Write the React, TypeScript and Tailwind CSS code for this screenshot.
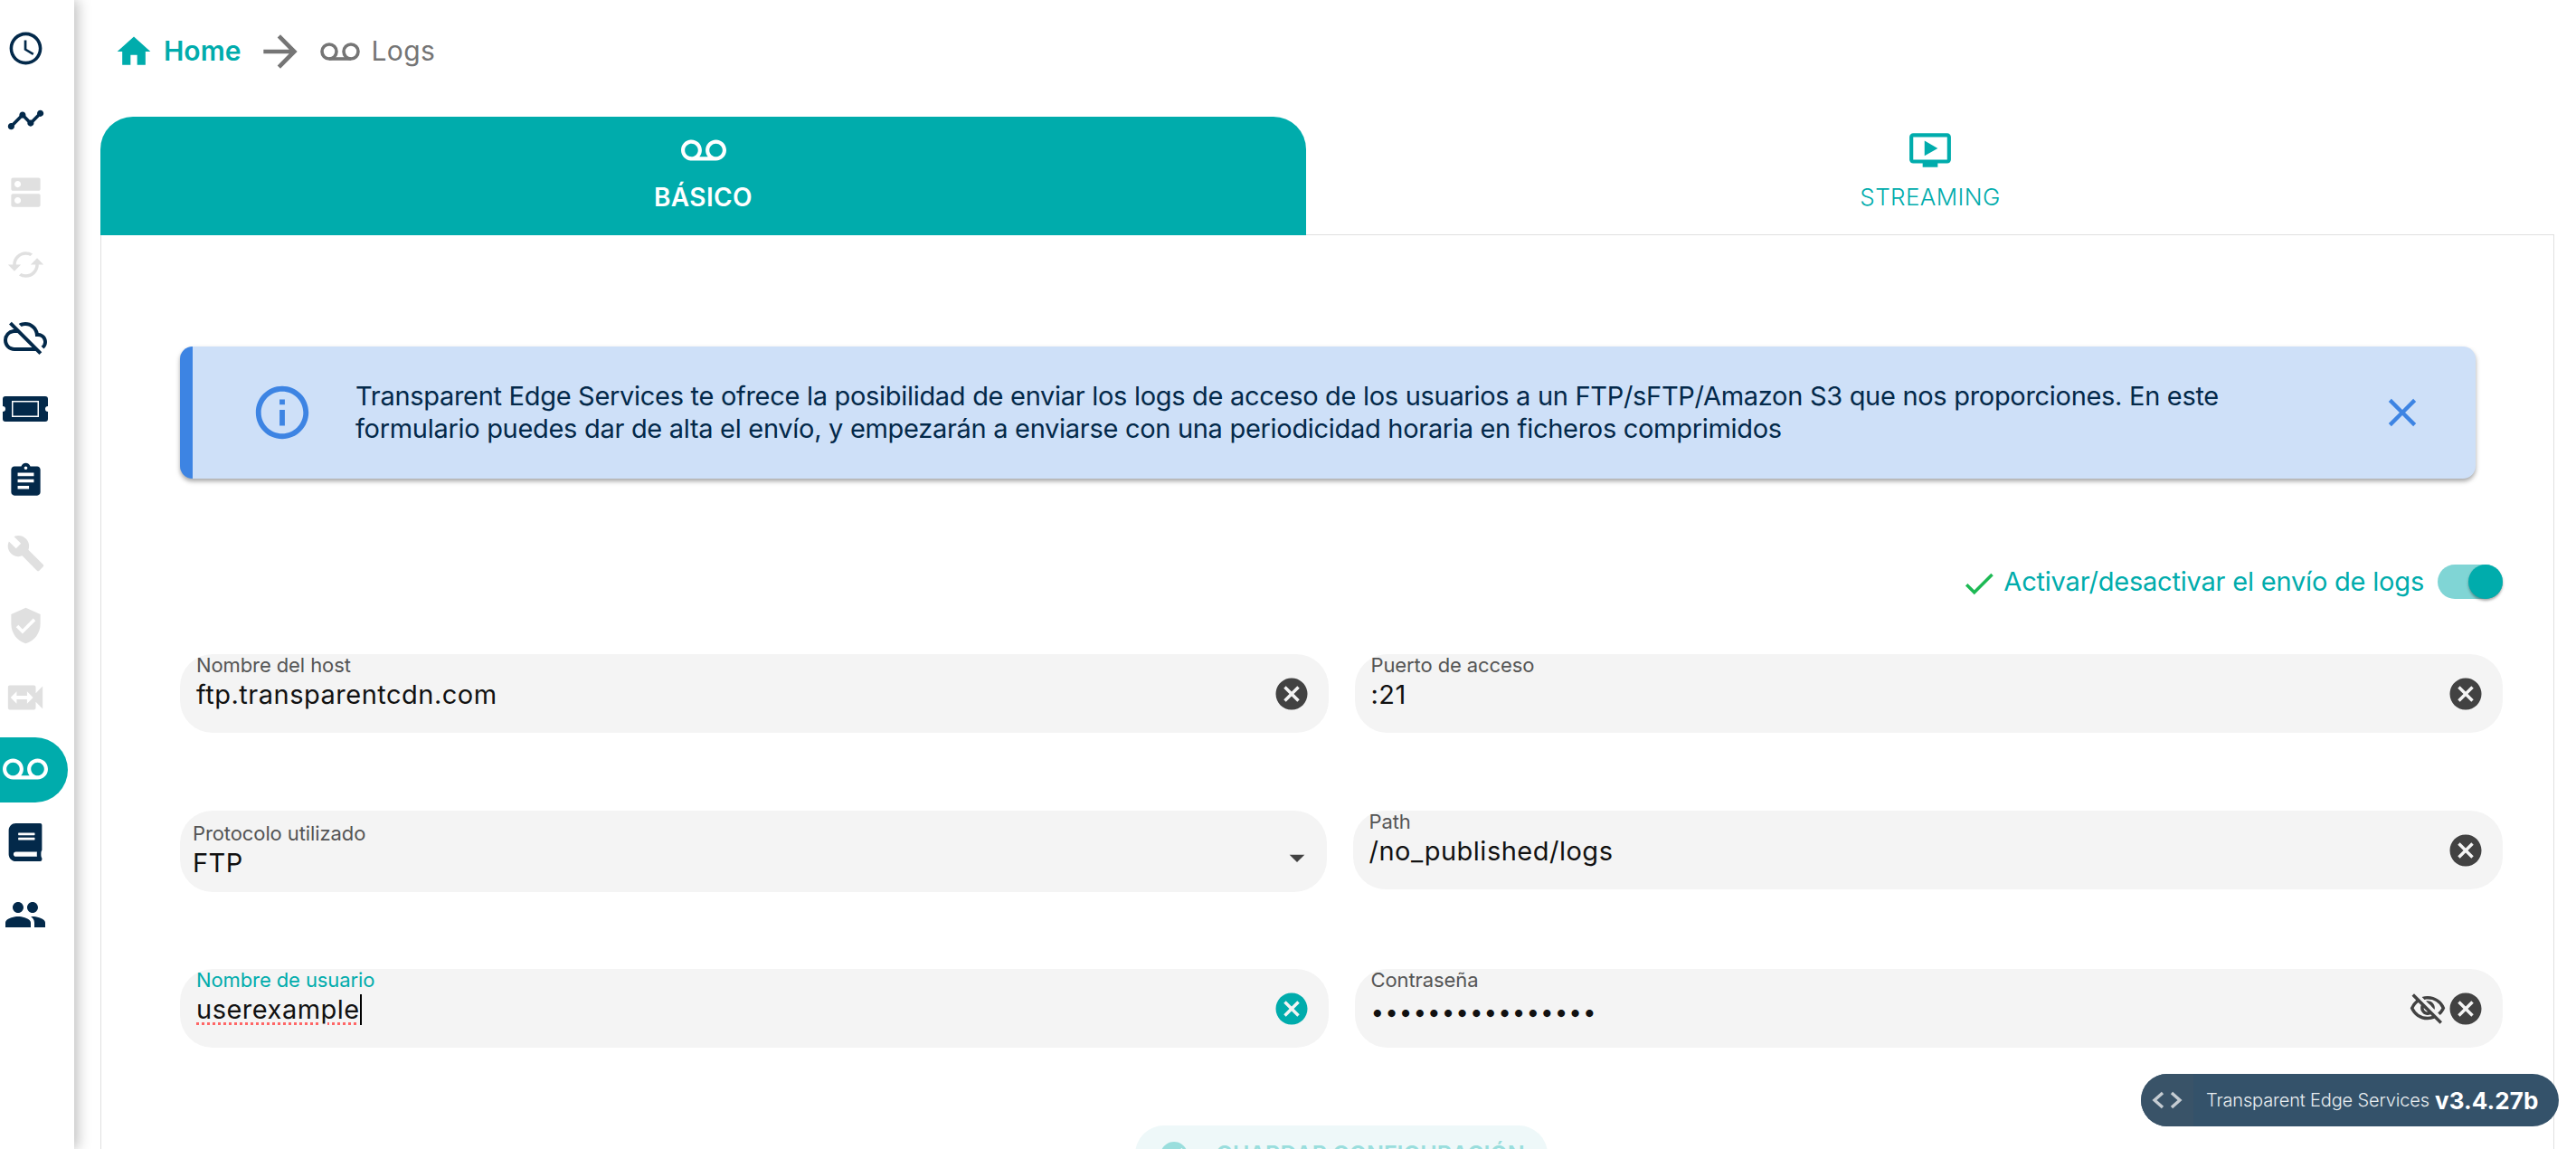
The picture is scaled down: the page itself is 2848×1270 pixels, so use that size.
import {
  MdAccessTime,
  MdTimeline,
  MdDns,
  MdSync,
  MdOutlineCloudOff,
  MdAssignment,
  MdBuild,
  MdVerifiedUser,
  MdSwitchVideo,
  MdVoicemail,
  MdPeople,
  MdHome,
  MdArrowForward,
  MdInfoOutline,
  MdClose,
  MdCheck,
  MdCancel,
  MdOutlineVisibilityOff,
  MdOutlineOndemandVideo,
  MdArrowDropDown,
  MdCheckCircle,
} from "react-icons/md";
import { FaBook } from "react-icons/fa";

const FONT = "font-['Inter','Liberation_Sans',sans-serif]";

function TicketIcon({ className }: { className?: string }) {
  return (
    <svg viewBox="0 0 50 28" className={className} fill="currentColor">
      <path
        fillRule="evenodd"
        d="M3 0h44a3 3 0 0 1 3 3v8a3 3 0 0 0 0 6v8a3 3 0 0 1-3 3H3a3 3 0 0 1-3-3v-8a3 3 0 0 0 0-6V3a3 3 0 0 1 3-3Zm7 5v18h30V5H10Z"
      />
      <path d="M11.5 6.5h27v15h-27z" />
    </svg>
  );
}

function SideItem({
  children,
  active,
  disabled,
}: {
  children: React.ReactNode;
  active?: boolean;
  disabled?: boolean;
}) {
  const color = active
    ? "bg-[#00acac] text-white rounded-r-[36px] w-[75px]"
    : disabled
      ? "text-[#e0e0e0] w-[56px]"
      : "text-[#03294a] w-[56px]";
  return <div className={`h-[72px] flex items-center justify-center ${color}`}>{children}</div>;
}

function Sidebar() {
  return (
    <aside className="w-[82px] shrink-0 h-full bg-white shadow-[4px_0_14px_rgba(0,0,0,0.25)] z-10 pt-[17px] flex flex-col gap-[7.8px]">
      <SideItem><MdAccessTime className="w-[43px] h-[43px]" /></SideItem>
      <SideItem><MdTimeline className="w-[43px] h-[43px]" /></SideItem>
      <SideItem disabled><MdDns className="w-[43px] h-[43px]" /></SideItem>
      <SideItem disabled><MdSync className="w-[43px] h-[43px] rotate-90" /></SideItem>
      <SideItem><MdOutlineCloudOff className="w-[48px] h-[48px]" /></SideItem>
      <SideItem><TicketIcon className="w-[50px] h-[34px]" /></SideItem>
      <SideItem><MdAssignment className="w-[43px] h-[43px]" /></SideItem>
      <SideItem disabled><MdBuild className="w-[43px] h-[43px]" /></SideItem>
      <SideItem disabled><MdVerifiedUser className="w-[43px] h-[43px]" /></SideItem>
      <SideItem disabled><MdSwitchVideo className="w-[46px] h-[46px]" /></SideItem>
      <SideItem active><MdVoicemail className="w-[50px] h-[50px] -ml-[19px]" /></SideItem>
      <SideItem><FaBook className="w-[38px] h-[42px]" /></SideItem>
      <SideItem><MdPeople className="w-[48px] h-[48px]" /></SideItem>
    </aside>
  );
}

function Field({
  label,
  value,
  labelClass = "text-[#555555]",
  focused,
  select,
  password,
}: {
  label: string;
  value: string;
  labelClass?: string;
  focused?: boolean;
  select?: boolean;
  password?: boolean;
}) {
  return (
    <div
      className={`flex-1 min-w-0 bg-[#f4f4f4] rounded-[36px] flex items-center pr-[23px] ${
        select ? "h-[90px] pl-[14px]" : "h-[87px] pl-[18px]"
      }`}
    >
      <div className={`flex-1 min-w-0 flex flex-col self-start ${select ? "pt-[13px]" : ""}`}>
        <span className={`text-[22px] leading-[25px] tracking-[-0.1px] ${labelClass}`}>{label}</span>
        <span className="mt-[2px] text-[29px] leading-[36px] tracking-[0.5px] text-[#111] flex items-center">
          {focused ? (
            <>
              <span className="underline decoration-dotted decoration-[#ff6666] decoration-[3px] underline-offset-[4px]">
                {value}
              </span>
              <span className="inline-block w-[2px] h-[34px] bg-black" />
            </>
          ) : password ? (
            <span className="tracking-[1px] text-[26px] mt-[3px]">{value}</span>
          ) : (
            value
          )}
        </span>
      </div>
      {password && <MdOutlineVisibilityOff className="w-[42px] h-[42px] text-[#424242]" />}
      {select ? (
        <MdArrowDropDown className="w-[40px] h-[40px] text-[#424242] mt-[14px] translate-x-[10px]" />
      ) : (
        <MdCancel className={`w-[42px] h-[42px] -mr-[3px] ${focused ? "text-[#00acac]" : "text-[#424242]"}`} />
      )}
    </div>
  );
}

export default function App() {
  return (
    <div className={`w-[2848px] h-[1270px] overflow-hidden flex bg-white ${FONT}`}>
      <Sidebar />
      <main className="flex-1 min-w-0 h-full pl-[29px] pr-[24px] relative">
        {/* breadcrumb */}
        <nav className="h-[129px] pb-[16px] pl-[15px] flex items-center">
          <MdHome className="w-[44px] h-[44px] text-[#00acac]" />
          <span className="ml-[11px] text-[30px] font-semibold text-[#00acac]">Home</span>
          <MdArrowForward className="ml-[16px] w-[56px] h-[56px] text-[#757575]" />
          <svg viewBox="0 0 44 20" className="ml-[16px] w-[44px] h-[20px] text-[#757575]" fill="none" stroke="currentColor" strokeWidth="3.6">
            <circle cx="10" cy="10" r="8" />
            <circle cx="34" cy="10" r="8" />
            <path d="M10 18h24" />
          </svg>
          <span className="ml-[12px] text-[30px] tracking-[0.4px] text-[#757575]">Logs</span>
        </nav>

        {/* tabs */}
        <div className="flex h-[131px]">
          <div className="w-[1333px] bg-[#00acac] rounded-t-[36px] flex flex-col items-center pt-[13px] text-white">
            <MdVoicemail className="w-[50px] h-[50px]" />
            <span className="text-[28px] font-semibold leading-[36px] mt-[8px] tracking-[0.4px]">BÁSICO</span>
          </div>
          <div className="flex-1 flex flex-col items-center pt-[12px] text-[#00acac]">
            <MdOutlineOndemandVideo className="w-[50px] h-[50px]" />
            <span className="text-[26px] font-light leading-[36px] mt-[9px] tracking-[0.4px]">STREAMING</span>
          </div>
        </div>

        {/* card */}
        <div className="h-[1100px] border border-[#e0e0e0] -mt-px bg-white pl-[87px] pr-[56px] pt-[123px]">
          <div className="mr-[30px] h-[146px] bg-[#cee0f8] rounded-[14px] border-l-[14px] border-[#3d84e3] shadow-[0_3px_5px_rgba(0,0,0,0.35)] flex items-center">
            <MdInfoOutline className="ml-[64px] w-[70px] h-[70px] text-[#3d84e3] shrink-0" />
            <p className="ml-[46px] w-[2150px] text-[29px] leading-[36px] text-[#03294a] tracking-[-0.3px]">
              Transparent Edge Services te ofrece la posibilidad de enviar los logs de acceso de los usuarios a un FTP/sFTP/Amazon S3 que nos proporciones. En este formulario puedes dar de alta el envío, y empezarán a enviarse con una periodicidad horaria en ficheros comprimidos
            </p>
            <MdClose className="ml-auto mr-[55px] w-[52px] h-[52px] text-[#3d84e3] shrink-0" />
          </div>

          <div className="mt-[94px] h-[40px] flex items-center justify-end">
            <MdCheck className="w-[42px] h-[42px] text-[#1db954] mt-[4px]" />
            <span className="ml-[6px] text-[29px] text-[#00acac] tracking-[-0.2px]">Activar/desactivar el envío de logs</span>
            <div className="ml-[15px] w-[72px] h-[38px] rounded-full bg-[#80d5d5] flex justify-end">
              <div className="w-[38px] h-[38px] rounded-full bg-[#00acac] shadow-[0_2px_3px_rgba(0,0,0,0.35)]" />
            </div>
          </div>

          <div className="mt-[60px] flex flex-col">
            <div className="flex gap-[29px]">
              <Field label="Nombre del host" value="ftp.transparentcdn.com" />
              <Field label="Puerto de acceso" value=":21" />
            </div>
            <div className="flex gap-[29px] mt-[86px] items-start">
              <Field label="Protocolo utilizado" value="FTP" select />
              <Field label="Path" value="/no_published/logs" />
            </div>
            <div className="flex gap-[29px] mt-[85px]">
              <Field label="Nombre de usuario" labelClass="text-[#00acac]" value="userexample" focused />
              <Field label="Contraseña" value="••••••••••••••••" password />
            </div>
          </div>

          <div className="mt-[86px] flex justify-center">
            <div className="w-[456px] h-[66px] rounded-[32px] bg-[#eef8f9] flex items-center justify-center gap-[28px] text-[#9adedd]">
              <MdCheckCircle className="w-[36px] h-[36px]" />
              <span className="text-[25px] font-semibold">GUARDAR CONFIGURACIÓN</span>
            </div>
          </div>
        </div>

        {/* version badge */}
        <div className="absolute right-[19px] top-[1187px] h-[58px] w-[462px] rounded-full bg-[#34526a] flex items-center overflow-hidden text-white">
          <div className="w-[58px] h-full bg-[#395368] flex items-center justify-center text-[#c5ccd2]">
            <svg viewBox="0 0 36 20" className="w-[36px] h-[20px]" fill="none" stroke="currentColor" strokeWidth="3.4">
              <path d="M13 2 4 10l9 8M23 2l9 8-9 8" />
            </svg>
          </div>
          <span className="ml-[14px] text-[20px] font-light text-[#e8edf0] tracking-[-0.15px]">Transparent Edge Services</span>
          <span className="ml-[6px] text-[26px] font-bold tracking-[0.1px]">v3.4.27b</span>
        </div>
      </main>
    </div>
  );
}
